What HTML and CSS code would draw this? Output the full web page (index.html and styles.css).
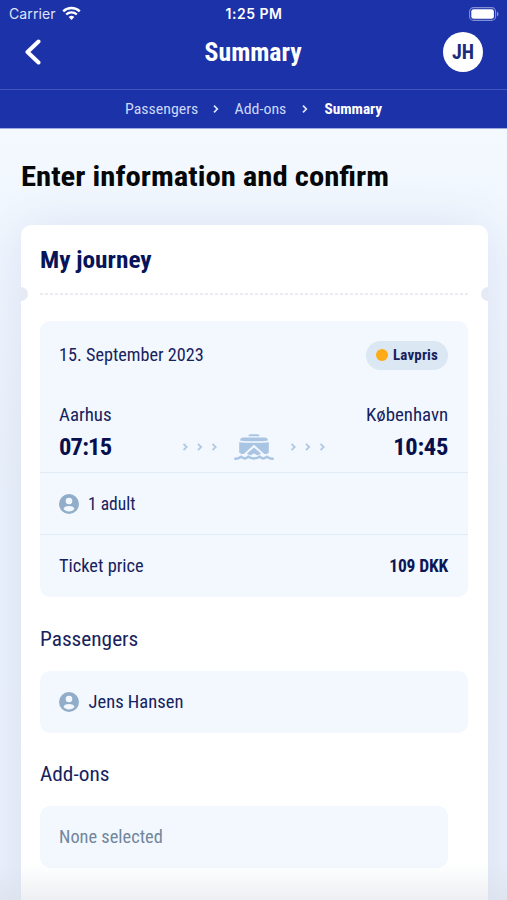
FILE: index.html
```html
<!DOCTYPE html>
<html lang="en">
<head>
<meta charset="utf-8">
<title>Summary</title>
<link rel="stylesheet" href="styles.css">
</head>
<body>
<svg class="defs" aria-hidden="true">
  <symbol id="user" viewBox="0 0 20 20"><circle cx="10" cy="10" r="10" fill="#91adc9"/><circle cx="10" cy="7" r="3.300" fill="#f3f8fe"/><path d="M4.500 15.100C5.200 12.600 7.600 12 10 12s4.800.6 5.500 3.100C14.300 16.700 12.300 17.500 10 17.500s-4.300-.8-5.500-2.400z" fill="#f3f8fe"/></symbol>
  <symbol id="arrows" viewBox="0 0 38 10"><path d="M2.500 1.800L5.700 5 2.500 8.200M17 1.800L20.200 5 17 8.200M31.500 1.800L34.700 5l-3.200 3.200" fill="none" stroke="#afc9e5" stroke-width="1.800"/></symbol>
</svg>
<header class="header">
  <div class="status">
    <div class="carrier"><span>Carrier</span>
      <svg width="19" height="15" viewBox="0 0 19 15" fill="none" stroke="#fff" stroke-width="2.400"><path d="M1.200 5.300a12 12 0 0 1 16.600 0M4.200 8.500a7.600 7.600 0 0 1 10.600 0"/><path d="M6.700 10.900a4.200 4.200 0 0 1 5.600 0L9.500 13.900z" fill="#fff" stroke="none"/></svg>
    </div>
    <span class="clock">1:25 PM</span>
    <svg class="battery" width="30" height="14" viewBox="0 0 30 14"><rect x=".6" y=".6" width="26" height="12.800" rx="4" fill="none" stroke="#8490d4" stroke-width="1.100"/><rect x="2.300" y="2.300" width="22.600" height="9.400" rx="2.300" fill="#fff"/><path d="M28 4.700c2 .6 2 4 0 4.600z" fill="#8490d4"/></svg>
  </div>
  <div class="nav">
    <svg class="back" width="18" height="26" viewBox="0 0 18 26"><path d="M14.500 2.500L3.500 13l11 10.500" fill="none" stroke="#fff" stroke-width="4" stroke-linecap="round" stroke-linejoin="round"/></svg>
    <h1 class="screen-title">Summary</h1>
    <div class="avatar">JH</div>
  </div>
  <nav class="crumbs">
    <span>Passengers</span>
    <svg width="6" height="8" viewBox="0 0 6 8"><path d="M1 .7L4.300 4 1 7.300" fill="none" stroke="#dce5fb" stroke-width="1.700"/></svg>
    <span>Add-ons</span>
    <svg width="6" height="8" viewBox="0 0 6 8"><path d="M1 .7L4.300 4 1 7.300" fill="none" stroke="#dce5fb" stroke-width="1.700"/></svg>
    <b>Summary</b>
  </nav>
</header>
<main>
  <h2 class="heading">Enter information and confirm</h2>
  <section class="card">
    <h3 class="card-title">My journey</h3>
    <div class="perforation"></div>
    <div class="trip">
      <div class="row top"><span class="date">15. September 2023</span><span class="tag"><i></i><b>Lavpris</b></span></div>
      <div class="row cities"><span class="from">Aarhus</span><span class="to">København</span></div>
      <div class="row times"><b class="time">07:15</b>
        <div class="route">
          <svg width="38" height="10"><use href="#arrows"/></svg>
          <svg width="40" height="28" viewBox="0 0 40 28"><path d="M14.300 3.200Q14.500 1.200 16.500 1.200h7q2 0 2.200 2zM6 6.900Q6.300 4.400 9 4.400h22q2.700 0 3 2.500l-.2.700L29 8.200H11L6 7.600zM5.200 9.200l6 .6h17.600l6-.6v10.600l-2.300 1.200h-2.200L20 11.800 9.700 21H7.500l-2.300-1.200z" fill="#a9c5e3"/><path d="M20 14.600l7 6-3.200 1.900L20 20.600l-3.800 1.900L13 20.600z" fill="#a9c5e3"/><path d="M1.200 25.700c2.800.4 4-.8 5.800-2 2.600 2.300 5 2.300 7.200 0 2.500 2.300 9 2.300 11.600 0 2.200 2.300 4.600 2.300 7.200 0 1.800 1.200 3 2.400 5.800 2" fill="none" stroke="#a9c5e3" stroke-width="2.400" stroke-linecap="round"/></svg>
          <svg width="38" height="10"><use href="#arrows"/></svg>
        </div>
        <b class="time arrive">10:45</b></div>
      <div class="row line people"><svg width="20" height="20"><use href="#user"/></svg><span class="adult">1 adult</span></div>
      <div class="row line price"><span class="ticket">Ticket price</span><b class="amount">109 DKK</b></div>
    </div>
    <h4 class="section-title">Passengers</h4>
    <div class="box"><svg width="20" height="20"><use href="#user"/></svg><span class="name">Jens Hansen</span></div>
    <h4 class="section-title">Add-ons</h4>
    <div class="box short"><span class="none">None selected</span></div>
  </section>
</main>
<div class="fade"></div>
</body>
</html>
```

FILE: styles.css
```css
* { box-sizing: border-box; }
body { margin: 0; height: 900px; overflow: hidden; position: relative; font-family: Roboto, "Liberation Sans", sans-serif; font-stretch: 85%; font-size: 17.500px; font-weight: 430; color: #16225e; background: linear-gradient(#f4f9ff 128px, #f0f6fe 250px, #eaf2fb 500px, #ebf2fc); white-space: nowrap; }
h1, h2, h3, h4 { margin: 0; }
svg { display: block; flex: none; }
.defs { position: absolute; width: 0; height: 0; }
.header { height: 129px; background: #1c32a8; color: #fff; border-bottom: 1px solid #9dabe0; }
.status { height: 27px; padding: 0 8px 0 9px; display: grid; grid-template-columns: 1fr auto 1fr; align-items: center; font-family: Inter, sans-serif; font-stretch: normal; font-size: 14px; }
.carrier { display: flex; align-items: center; gap: 6px; color: #dfe5fa; letter-spacing: .1px; }
.clock { font-weight: 600; letter-spacing: .5px; }
.battery { justify-self: end; }
.nav { height: 63px; padding: 0 24px 11px 24px; border-bottom: 1px solid #4154b9; display: grid; grid-template-columns: 1fr auto 1fr; align-items: center; }
.back { margin-top: -1px; }
.screen-title { font-size: 25px; font-weight: 700; line-height: 32px; transform: scaleX(1.03); }
.avatar { justify-self: end; width: 40px; height: 40px; margin-top: -1px; border-radius: 50%; background: #fff; color: #1c2b7c; display: grid; place-items: center; font-size: 20px; font-weight: 700; }
.crumbs { height: 38px; padding-left: 2px; display: flex; align-items: center; justify-content: center; gap: 17px; font-size: 15px; color: #cbd8f8; }
.crumbs span { transform: scaleX(1.06); }
.crumbs b { color: #fff; transform: scaleX(1.02); }
main { padding: 30px 19px 0 21px; }
.heading, .card-title, .section-title, .date, .from, .ticket, .name, .none { transform-origin: left center; }
.to { transform-origin: right center; }
.heading { font-size: 28.500px; line-height: 36px; font-weight: 700; transform: scaleX(1.078); color: #050709; }
.card { margin-top: 30px; height: 720px; padding: 18px 20px 0 19px; border-radius: 10px; background: #fff; box-shadow: 0 0 50px rgba(65, 75, 145, .11); }
.card-title { font-size: 24px; line-height: 35px; transform: scaleX(1.055); color: #07145a; }
.perforation { position: relative; height: 2px; margin-top: 15px; background: repeating-linear-gradient(90deg, #e9edf1 0 3px, #fff 3px 5px); }
.perforation::before, .perforation::after { content: ""; position: absolute; top: -6px; width: 7px; height: 14px; background: #e6eaf4; }
.perforation::before { left: -19px; border-radius: 0 7px 7px 0; }
.perforation::after { right: -20px; border-radius: 7px 0 0 7px; }
.trip { margin-top: 26px; height: 276px; border-radius: 10px; background: #f3f8fe; }
.row { display: flex; align-items: center; justify-content: space-between; padding: 0 20px 0 19px; }
.top { height: 68px; }
.date { transform: scaleX(1.04); }
.from { transform: scaleX(1.08); }
.to { transform: scaleX(1.08); }
.tag { width: 82px; height: 29px; border-radius: 15px; background: #dbe7f2; display: flex; align-items: center; padding-left: 10px; gap: 5px; font-size: 15px; letter-spacing: .15px; }
.tag i { width: 12px; height: 12px; border-radius: 50%; background: #ffab17; }
.cities { height: 26px; margin-top: 12.500px; }
.times { height: 44.500px; padding-bottom: 7px; }
.route { position: relative; top: .5px; }
.time { font-size: 24.500px; letter-spacing: -.8px; color: #070f4d; width: 82px; }
.arrive { text-align: right; letter-spacing: -.3px; }
.route { display: flex; align-items: center; gap: 15px; }
.line { border-top: 1.500px solid #e1ebf5; height: 62px; }
.people { justify-content: flex-start; gap: 9px; }
.ticket { transform: scaleX(1.05); }
.price b { font-size: 17.500px; letter-spacing: -.15px; color: #0c1755; }
.section-title { font-size: 20px; line-height: 28px; font-weight: 430; transform: scaleX(1.065); margin: 27.500px 0 18px; }
.box { height: 62px; border-radius: 10px; background: #f3f8fe; display: flex; align-items: center; gap: 9px; padding: 0 19px; }
.name { transform: translateX(.5px) scaleX(1.06); }
.short { margin-right: 20px; }
.none { color: #72869c; transform: scaleX(1.05); }
.fade { position: absolute; left: 0; right: 0; bottom: 0; height: 36px; background: linear-gradient(rgba(215, 222, 235, 0), rgba(215, 220, 228, .45)); }
```
